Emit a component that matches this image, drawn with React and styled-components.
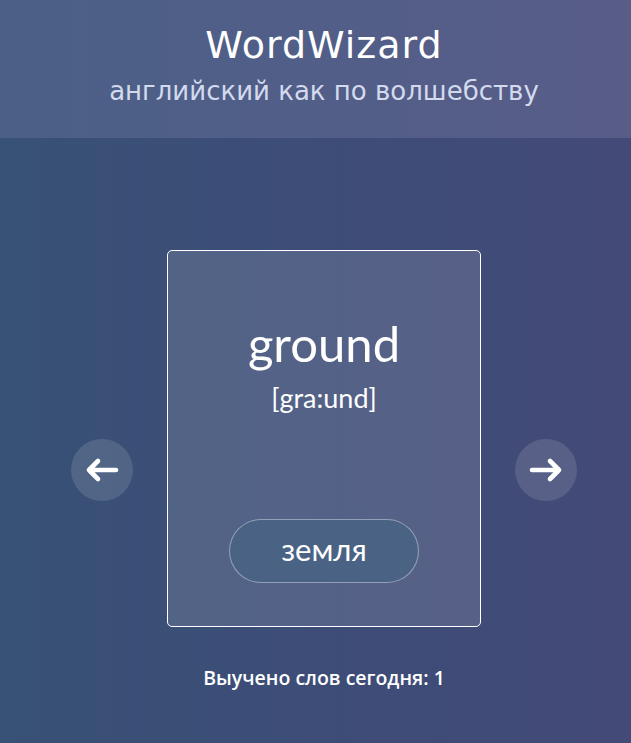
import React from 'react';
import styled, { createGlobalStyle } from 'styled-components';

const GlobalStyle = createGlobalStyle`
    html, body {
        margin: 0;
        padding: 0;
    }
    body {
        font-family: "Open Sans", "DejaVu Sans", sans-serif;
        color: #ffffff;
    }
`;

const Page = styled.div`
    min-height: 743px;
    background: linear-gradient(90deg, #385176 0%, #3e4c77 60%, #444a78 100%);
    display: flex;
    flex-direction: column;
`;

const Header = styled.header`
    height: 138px;
    box-sizing: border-box;
    padding: 22px 0 0 17px;
    background: linear-gradient(90deg, #4b6087 0%, #535e88 60%, #585d88 100%);
    text-align: center;
`;

const Title = styled.h1`
    margin: 0;
    font-family: "DejaVu Sans", sans-serif;
    font-weight: normal;
    font-size: 38px;
    letter-spacing: 1px;
    line-height: 46px;
    color: #ffffff;
`;

const Subtitle = styled.p`
    margin: 5px 0 0;
    font-family: "DejaVu Sans", sans-serif;
    font-size: 26px;
    line-height: 36px;
    color: #d3daee;
`;

const Main = styled.main`
    display: flex;
    flex-direction: column;
    align-items: center;
    padding: 112px 0 0 17px;
`;

const Row = styled.div`
    display: flex;
    align-items: flex-start;
    gap: 34px;
`;

const NavButton = styled.button`
    margin-top: 189px;
    width: 62px;
    height: 62px;
    border-radius: 50%;
    border: none;
    background: rgba(255, 255, 255, 0.12);
    display: flex;
    align-items: center;
    justify-content: center;
    padding: 0;
    cursor: pointer;
`;

const Card = styled.div`
    width: 314px;
    height: 377px;
    box-sizing: border-box;
    border: 1px solid #ffffff;
    border-radius: 5px;
    background: rgba(255, 255, 255, 0.12);
    display: flex;
    flex-direction: column;
    align-items: center;
    padding-top: 62px;
    font-family: Lato, "Open Sans", sans-serif;
`;

const Word = styled.div`
    font-size: 49px;
    line-height: 60px;
    color: #ffffff;
`;

const Transcription = styled.div`
    margin-top: 9px;
    font-size: 27px;
    line-height: 32px;
    color: #ffffff;
`;

const TranslateButton = styled.button`
    margin-top: auto;
    margin-bottom: 43px;
    width: 190px;
    height: 64px;
    border-radius: 32px;
    border: 1px solid rgba(255, 255, 255, 0.4);
    background: #4a6385;
    color: #ffffff;
    font-family: Lato, "Open Sans", sans-serif;
    font-size: 31px;
    padding: 0 0 4px;
    cursor: pointer;
`;

const Counter = styled.p`
    margin: 38px 0 0;
    font-family: "Open Sans", sans-serif;
    font-weight: 600;
    font-size: 19.5px;
    line-height: 26px;
    color: #ffffff;
`;

const Arrow = ({ left }) => (
    <svg width="34" height="26" viewBox="0 0 34 26">
        <path
            d={left ? 'M31 13 H4 M13 4 L4 13 L13 22' : 'M3 13 H30 M21 4 L30 13 L21 22'}
            fill="none"
            stroke="#ffffff"
            strokeWidth="4.6"
            strokeLinecap="round"
            strokeLinejoin="round"
        />
    </svg>
);

export default function App() {
    return (
        <Page>
            <GlobalStyle />
            <Header>
                <Title>WordWizard</Title>
                <Subtitle>английский как по волшебству</Subtitle>
            </Header>
            <Main>
                <Row>
                    <NavButton aria-label="previous">
                        <Arrow left />
                    </NavButton>
                    <Card>
                        <Word>ground</Word>
                        <Transcription>[gra:und]</Transcription>
                        <TranslateButton>земля</TranslateButton>
                    </Card>
                    <NavButton aria-label="next">
                        <Arrow />
                    </NavButton>
                </Row>
                <Counter>Выучено слов сегодня: 1</Counter>
            </Main>
        </Page>
    );
}
